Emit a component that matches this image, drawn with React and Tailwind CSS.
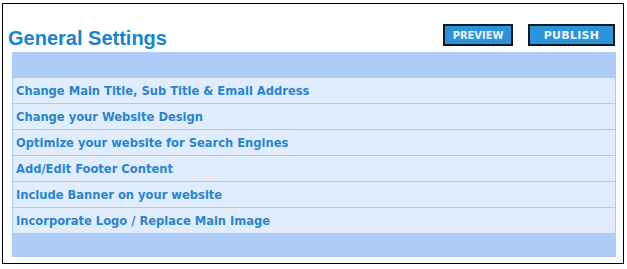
import React from "react";

const links = [
  "Change Main Title, Sub Title & Email Address",
  "Change your Website Design",
  "Optimize your website for Search Engines",
  "Add/Edit Footer Content",
  "Include Banner on your website",
  "Incorporate Logo / Replace Main Image",
];

export default function App() {
  return (
    <div className="w-[627px] h-[269px] bg-white pt-[3px] pl-[2px]">
      <div className="w-[622px] h-[261px] border border-black flex flex-col pl-[9px] pr-[7px]">
        {/* Title row */}
        <div className="h-[48px] flex items-start">
          <h1
            className="mt-[22px] -ml-[4px] text-[20px] font-bold text-[#1585d3] leading-[24px]"
            style={{ fontFamily: '"Liberation Sans", Arial, sans-serif' }}
          >
            General Settings
          </h1>
          <div className="ml-auto mt-[20px] mr-[1px] flex gap-[15px]">
            <button
              className="w-[70px] h-[22px] border-2 border-[#101820] bg-[#2a93da] text-[11px] font-bold text-[#eef5ff] leading-none flex items-center justify-center font-stretch-condensed"
              style={{ fontFamily: '"DejaVu Sans Condensed", "DejaVu Sans", Tahoma, sans-serif' }}
            >
              PREVIEW
            </button>
            <button
              className="w-[87px] h-[22px] border-2 border-[#101820] bg-[#2a93da] text-[11px] font-bold tracking-[0.3px] text-[#eef5ff] leading-none flex items-center justify-center"
              style={{ fontFamily: '"DejaVu Sans", Verdana, sans-serif' }}
            >
              PUBLISH
            </button>
          </div>
        </div>

        {/* Settings list */}
        <div className="w-[604px] flex flex-col">
          <div className="h-[25px] bg-[#adcdf8]" />
          {links.map((text) => (
            <a
              key={text}
              href="#"
              className="h-[26px] border-t border-x border-[#a9ccf6] bg-[#e1edfc] pl-[3px] flex items-center text-[12.8px] font-bold text-[#2785d1] font-stretch-condensed"
              style={{ fontFamily: '"DejaVu Sans Condensed", "DejaVu Sans", Tahoma, sans-serif' }}
            >
              {text}
            </a>
          ))}
          <div className="h-[24px] bg-[#adcdf8]" />
        </div>
      </div>
    </div>
  );
}
